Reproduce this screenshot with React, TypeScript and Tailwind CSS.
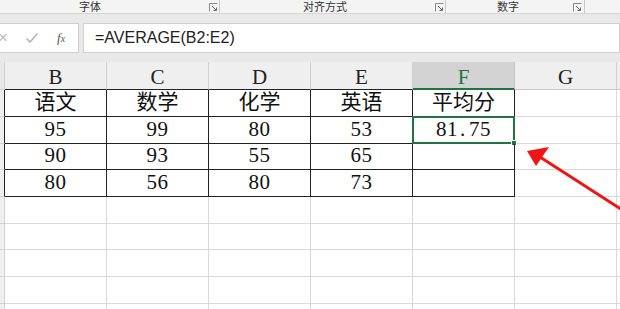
import React from "react";

const headers = ["B", "C", "D", "E", "F", "G"];
const data: string[][] = [
  ["语文", "数学", "化学", "英语", "平均分"],
  ["95", "99", "80", "53", "81.75"],
  ["90", "93", "55", "65", ""],
  ["80", "56", "80", "73", ""],
  ["", "", "", "", ""],
  ["", "", "", "", ""],
  ["", "", "", "", ""],
  ["", "", "", "", ""],
  ["", "", "", "", ""],
];
const rowH = ["h-[27px]", "h-[27px]", "h-[26px]", "h-[27px]", "h-[27px]", "h-[26px]", "h-[27px]", "h-[27px]", "h-[27px]"];

function Launcher() {
  return (
    <svg width="9" height="9" viewBox="0 0 9 9" className="block">
      <path d="M0.5 8.5 V0.5 H8.5" fill="none" stroke="#8a8a8a" strokeWidth="1" />
      <path d="M3 3 L7.5 7.5 M7.5 4.5 V7.5 H4.5" fill="none" stroke="#6a6a6a" strokeWidth="1" />
    </svg>
  );
}

function CellText({ v }: { v: string }) {
  if (v === "81.75") {
    return (
      <span>
        81<span className="inline-block w-[11px] pl-[2px] text-left">.</span>75
      </span>
    );
  }
  return <span>{v}</span>;
}

export default function App() {
  const serif = "font-['Liberation_Serif','Noto_Sans_CJK_SC',serif]";
  return (
    <div className="relative w-[620px] h-[309px] overflow-hidden bg-white">
      {/* Ribbon group labels */}
      <div className="flex h-[14px] bg-[#f4f4f4] border-b border-[#d6d6d6] text-[11px] leading-[12px] text-[#333] font-['Noto_Sans_CJK_SC',sans-serif] overflow-hidden">
        <div className="relative w-[220px] h-full border-r border-[#c9c9c9]">
          <span className="absolute left-[79px] top-0">字体</span>
          <div className="absolute left-[209px] top-[3px]"><Launcher /></div>
        </div>
        <div className="relative w-[226px] h-full border-r border-[#c9c9c9]">
          <span className="absolute left-[83px] top-0">对齐方式</span>
          <div className="absolute left-[215px] top-[3px]"><Launcher /></div>
        </div>
        <div className="relative w-[139px] h-full border-r border-[#c9c9c9]">
          <span className="absolute left-[51px] top-0">数字</span>
          <div className="absolute left-[127px] top-[3px]"><Launcher /></div>
        </div>
        <div className="flex-1" />
      </div>

      {/* Formula bar band */}
      <div className="bg-[#e9e9e9] pt-[9px] pb-[9px]">
        <div className="flex h-[30px] gap-[4px]">
          <div className="w-[79px] bg-white border-y border-r border-[#cfcfcf] flex items-center">
            <span className="w-[22px] -ml-[8px] text-[17px] text-[#bdbdbd] font-['Liberation_Sans',sans-serif] text-center">×</span>
            <svg width="14" height="12" viewBox="0 0 14 12" className="ml-[11px]">
              <path d="M1.5 6.5 L5 10 L12.5 1.5" fill="none" stroke="#b5b5b5" strokeWidth="1.6" />
            </svg>
            <span className="ml-[18px] text-[13px] italic text-[#555] font-['Liberation_Serif',serif]">
              f<span className="text-[10px]">x</span>
            </span>
          </div>
          <div className="flex-1 bg-white border border-[#cfcfcf] flex items-center pl-[11px] text-[16px] text-[#222] font-['Liberation_Sans',sans-serif]">
            =AVERAGE(B2:E2)
          </div>
        </div>
      </div>

      {/* Grid */}
      <div className={`${serif} text-[21px] text-[#111] leading-none`}>
        {/* header row */}
        <div className="flex h-[28px]">
          <div className="w-[5px] shrink-0 bg-[#e9e9e9] border-r border-b border-[#cfcfcf]" />
          {headers.map((h) => {
            const isF = h === "F";
            const isG = h === "G";
            return (
              <div
                key={h}
                className={
                  "w-[102px] shrink-0 flex items-end justify-center border-r " +
                  (isF
                    ? "bg-[#d3d3d3] text-[#217346] border-[#c6c6c6] border-b-2 border-b-[#217346] pb-[0px]"
                    : isG
                    ? "bg-[#efefef] text-[#222] border-[#d0d0d0] border-b border-b-[#c8c8c8] pb-[1px]"
                    : "bg-[#efefef] text-[#222] border-[#d0d0d0] border-b border-b-[#222] pb-[1px]")
                }
              >
                {h}
              </div>
            );
          })}
          <div className="flex-1 bg-[#efefef] border-b border-[#c8c8c8]" />
        </div>

        {data.map((row, r) => {
          const inTable = r < 4;
          return (
            <div key={r} className={`flex ${rowH[r]}`}>
              <div
                className={
                  "w-[5px] shrink-0 bg-[#efefef] border-b border-[#d4d4d4] border-r " +
                  (inTable ? "border-r-[#222]" : "border-r-[#d4d4d4]")
                }
              />
              {row.map((v, c) => {
                const selected = r === 1 && c === 4;
                return (
                  <div
                    key={c}
                    className={
                      "relative w-[102px] shrink-0 flex items-end justify-center pb-[3px] border-r border-b " +
                      (inTable ? "border-[#222]" : "border-[#d9d9d9]") +
                      (r === 0 ? " pb-[2px] text-[21px]" : " tracking-[0.5px]")
                    }
                  >
                    <CellText v={v} />
                    {selected && (
                      <div className="absolute -inset-[1px] border-2 border-[#217346]">
                        <div className="absolute -right-[4px] -bottom-[4px] w-[6px] h-[6px] bg-[#217346] border border-white" />
                      </div>
                    )}
                  </div>
                );
              })}
              <div className="w-[102px] shrink-0 border-r border-b border-[#d9d9d9]" />
              <div className="flex-1 border-b border-[#d9d9d9]" />
            </div>
          );
        })}
      </div>

      {/* red arrow annotation */}
      <svg className="absolute left-0 top-0 pointer-events-none" width="620" height="309" viewBox="0 0 620 309">
        <line x1="624" y1="211" x2="540" y2="157" stroke="#f01414" strokeWidth="3" strokeLinecap="round" />
        <polygon points="527,151 549,147 536,166" fill="#f01414" />
      </svg>
    </div>
  );
}
